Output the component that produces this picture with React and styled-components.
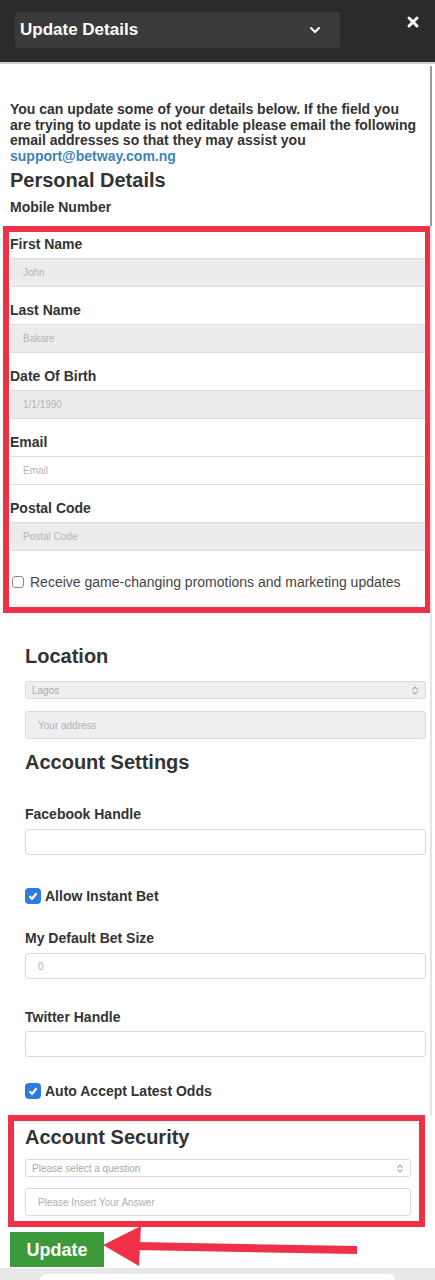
import styled, { createGlobalStyle } from "styled-components";
import { ChevronDown, X } from "lucide-react";

const GlobalStyle = createGlobalStyle`
  * { box-sizing: border-box; }
  body {
    margin: 0;
    background: #fff;
    font-family: "Liberation Sans", Arial, sans-serif;
    color: #333;
  }
  #root { width: 435px; }
`;

const personalFields = [
  { label: "First Name", value: "John", bg: "#ececec" },
  { label: "Last Name", value: "Bakare", bg: "#ececec" },
  { label: "Date Of Birth", value: "1/1/1990", bg: "#ececec" },
  { label: "Email", value: "Email", bg: "#fff" },
  { label: "Postal Code", value: "Postal Code", bg: "#ececec" },
];

function UpDown() {
  return (
    <svg width="8" height="9" viewBox="0 0 8 9" fill="none" stroke="#aaa" strokeWidth="1.2">
      <path d="M1.5 3.5 L4 1 L6.5 3.5" />
      <path d="M1.5 5.5 L4 8 L6.5 5.5" />
    </svg>
  );
}

function Check({ checked }) {
  return (
    <Box $checked={checked}>
      {checked && (
        <svg width="12" height="12" viewBox="0 0 12 12" fill="none" stroke="#fff" strokeWidth="2.2">
          <path d="M2.5 6.3 L5 8.8 L9.6 3.2" />
        </svg>
      )}
    </Box>
  );
}

function App() {
  return (
    <>
      <GlobalStyle />
      <Header>
        <TitleSelect>
          <span>Update Details</span>
          <ChevronDown size={16} strokeWidth={3} color="#fff" />
        </TitleSelect>
        <Close>
          <X size={16} strokeWidth={4.5} color="#fff" />
        </Close>
      </Header>

      <Content>
        <Track>
          <Thumb />
        </Track>

        <Intro>
          You can update some of your details below. If the field you are trying to update is not
          editable please email the following email addresses so that they may assist you
          <Link>support@betway.com.ng</Link>
        </Intro>
        <Heading $mt={4} $pl={10}>Personal Details</Heading>
        <Label $mt={7} $pl={10}>Mobile Number</Label>

        <Highlight $mt={11} $ml={3} $w={428} $pad="4px 0 16px 1px">
          {personalFields.map((f) => (
            <Field key={f.label}>
              <Label>{f.label}</Label>
              <FlatInput $bg={f.bg} placeholder={f.value} readOnly />
            </Field>
          ))}
          <CheckRow $mt={22} $pl={2} $gap={6}>
            <Check />
            <CheckText>Receive game-changing promotions and marketing updates</CheckText>
          </CheckRow>
        </Highlight>

        <Settings>
          <Heading $mt={31}>Location</Heading>
          <SelectBox $mt={13} $bg="#efefef">
            <span>Lagos</span>
            <UpDown />
          </SelectBox>
          <BoxInput $mt={12} $h={28} $bg="#efefef" placeholder="Your address" readOnly />

          <Heading $mt={11}>Account Settings</Heading>
          <Label $mt={32}>Facebook Handle</Label>
          <BoxInput $mt={7} $h={26} readOnly />
          <CheckRow $mt={32} $gap={4}>
            <Check checked />
            <Label>Allow Instant Bet</Label>
          </CheckRow>
          <Label $mt={25}>My Default Bet Size</Label>
          <BoxInput $mt={7} $h={26} placeholder="0" readOnly />
          <Label $mt={30}>Twitter Handle</Label>
          <BoxInput $mt={6} $h={26} readOnly />
          <CheckRow $mt={25} $gap={4}>
            <Check checked />
            <Label>Auto Accept Latest Odds</Label>
          </CheckRow>
        </Settings>

        <Highlight $mt={15} $ml={8} $w={417} $pad="4px 8px 5px 11px">
          <Heading>Account Security</Heading>
          <SelectBox $mt={10} $bg="#fff">
            <span>Please select a question</span>
            <UpDown />
          </SelectBox>
          <BoxInput $mt={11} $h={28} placeholder="Please Insert Your Answer" readOnly />
        </Highlight>

        <Actions>
          <UpdateButton>Update</UpdateButton>
          <Arrow width="270" height="48" viewBox="0 0 270 48">
            <polygon points="8,23 46,4 44,44" fill="#ee3147" />
            <polygon points="40,20 262,24 262,32 40,28" fill="#ee3147" />
          </Arrow>
        </Actions>
      </Content>

      <BottomBar>
        <BottomTab />
      </BottomBar>
    </>
  );
}

export default App;

const Header = styled.header`
  height: 64px;
  background: #2b2b2b;
  border-bottom: 2px solid #cfcfcf;
  display: flex;
  align-items: flex-start;
  padding: 12px 0 0 15px;
`;

const TitleSelect = styled.div`
  width: 325px;
  height: 36px;
  background: #3a3a3a;
  border-radius: 4px;
  display: flex;
  align-items: center;
  justify-content: space-between;
  padding: 0 17px 0 5px;
  color: #fff;
  font-size: 17px;
  font-weight: bold;
`;

const Close = styled.div`
  margin: 2px 14px 0 auto;
  display: flex;
`;

const Content = styled.main`
  position: relative;
  padding-top: 38px;
`;

const Track = styled.div`
  position: absolute;
  top: 2px;
  right: 3px;
  width: 2px;
  height: 1050px;
  background: #e4e4e4;
`;

const Thumb = styled.div`
  height: 160px;
  background: #9a9a9a;
`;

const Intro = styled.p`
  margin: 0;
  padding: 0 14px 0 10px;
  font-size: 14px;
  font-weight: bold;
  line-height: 15.5px;
  color: #333;
`;

const Link = styled.span`
  display: block;
  color: #3d84b8;
`;

const Heading = styled.h2`
  margin: ${(p) => p.$mt || 0}px 0 0;
  padding-left: ${(p) => p.$pl || 0}px;
  font-size: 20px;
  line-height: 24px;
  font-weight: bold;
  color: #333;
`;

const Label = styled.div`
  margin-top: ${(p) => p.$mt || 0}px;
  padding-left: ${(p) => p.$pl || 0}px;
  font-size: 14px;
  line-height: 16px;
  font-weight: bold;
  color: #333;
`;

const Highlight = styled.section`
  margin: ${(p) => p.$mt}px 0 0 ${(p) => p.$ml}px;
  width: ${(p) => p.$w}px;
  border: 6px solid #ee3147;
  padding: ${(p) => p.$pad};
`;

const Field = styled.div`
  display: flex;
  flex-direction: column;
  gap: 6px;
  & + & {
    margin-top: 15px;
  }
`;

const FlatInput = styled.input`
  width: 100%;
  height: 29px;
  border: none;
  border-top: 1px solid #dcdcdc;
  border-bottom: 1px solid #dcdcdc;
  background: ${(p) => p.$bg};
  padding: 0 0 0 13px;
  font-family: inherit;
  font-size: 10px;
  outline: none;
  &::placeholder { color: #b3b3b3; }
`;

const CheckRow = styled.label`
  display: flex;
  align-items: center;
  gap: ${(p) => p.$gap}px;
  margin-top: ${(p) => p.$mt || 0}px;
  padding-left: ${(p) => p.$pl || 0}px;
  height: 18px;
`;

const Box = styled.span`
  flex: none;
  display: flex;
  align-items: center;
  justify-content: center;
  width: ${(p) => (p.$checked ? 16 : 12)}px;
  height: ${(p) => (p.$checked ? 16 : 12)}px;
  border-radius: ${(p) => (p.$checked ? 4 : 3)}px;
  background: ${(p) => (p.$checked ? "#2d7be0" : "#fff")};
  border: ${(p) => (p.$checked ? "none" : "1px solid #8a8a8a")};
`;

const CheckText = styled.span`
  font-size: 14px;
  color: #444;
`;

const Settings = styled.section`
  padding: 0 9px 0 25px;
`;

const SelectBox = styled.div`
  margin-top: ${(p) => p.$mt}px;
  height: 18px;
  background: ${(p) => p.$bg};
  border: 1px solid #dadada;
  border-radius: 3px;
  display: flex;
  align-items: center;
  justify-content: space-between;
  padding: 0 6px 0 6px;
  font-size: 10px;
  color: #a8a8a8;
`;

const BoxInput = styled.input`
  display: block;
  margin-top: ${(p) => p.$mt}px;
  width: 100%;
  height: ${(p) => p.$h}px;
  background: ${(p) => p.$bg || "#fff"};
  border: 1px solid #dadada;
  border-radius: 3px;
  padding: 0 0 0 12px;
  font-family: inherit;
  font-size: 10px;
  outline: none;
  &::placeholder { color: #b0b0b0; }
`;

const Actions = styled.div`
  position: relative;
  margin-top: 5px;
  padding-left: 10px;
  height: 35px;
`;

const UpdateButton = styled.button`
  width: 94px;
  height: 35px;
  border: none;
  background: #3c9a3b;
  color: #fff;
  font-family: inherit;
  font-size: 18px;
  font-weight: bold;
  padding: 2px 0 0;
`;

const Arrow = styled.svg`
  position: absolute;
  left: 95px;
  top: -10px;
`;

const BottomBar = styled.footer`
  margin-top: 1px;
  height: 12px;
  background: #e8e8e8;
  padding: 6px 40px 0;
`;

const BottomTab = styled.div`
  height: 6px;
  background: #fff;
  border-radius: 6px 6px 0 0;
`;
